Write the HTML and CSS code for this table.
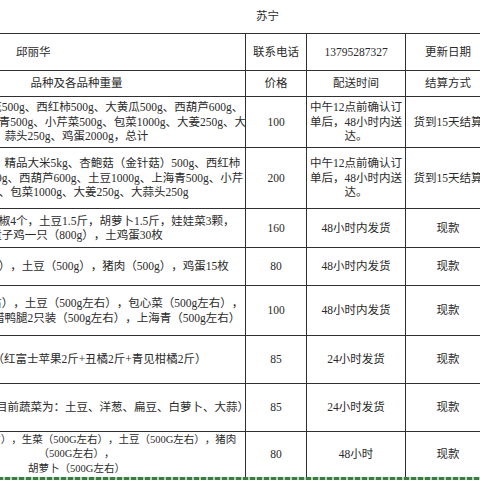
FILE: index.html
```html
<!DOCTYPE html>
<html lang="zh-CN">
<head>
<meta charset="utf-8">
<title>苏宁</title>
<link rel="stylesheet" href="styles.css">
</head>
<body>
<div class="sheet">
  <div class="title"><span>苏宁</span></div>
  <div class="grid">
    <div class="c name">邱丽华</div>
    <div class="c">联系电话</div>
    <div class="c">13795287327</div>
    <div class="c">更新日期</div>

    <div class="c">品种及各品种重量</div>
    <div class="c">价格</div>
    <div class="c">配送时间</div>
    <div class="c">结算方式</div>

    <div class="c">
      <span class="ln">土豆500g、西兰花500g、西红柿500g、大黄瓜500g、西葫芦600g、</span>
      <span class="ln">胡萝卜500g、上海青500g、小芹菜500g、包菜1000g、大姜250g、大</span>
      <span class="ln">蒜头250g、鸡蛋2000g，总计</span>
    </div>
    <div class="c">100</div>
    <div class="c">
      <span class="ln">中午12点前确认订</span>
      <span class="ln">单后，48小时内送</span>
      <span class="ln">达。</span>
    </div>
    <div class="c">货到15天结算</div>

    <div class="c">
      <span class="ln">乐享套餐二内含：精品大米5kg、杏鲍菇（金针菇）500g、西红柿</span>
      <span class="ln">1000g、大黄瓜500g、西葫芦600g、土豆1000g、上海青500g、小芹</span>
      <span class="ln">菜500g、包菜1000g、大姜250g、大蒜头250g</span>
    </div>
    <div class="c">200</div>
    <div class="c">
      <span class="ln">中午12点前确认订</span>
      <span class="ln">单后，48小时内送</span>
      <span class="ln">达。</span>
    </div>
    <div class="c">货到15天结算</div>

    <div class="c">
      <span class="ln">五花肉500g，青椒4个，土豆1.5斤，胡萝卜1.5斤，娃娃菜3颗，</span>
      <span class="ln">童子鸡一只（800g），土鸡蛋30枚</span>
    </div>
    <div class="c">160</div>
    <div class="c">48小时内发货</div>
    <div class="c">现款</div>

    <div class="c">
      <span class="ln">西红柿（1000g），土豆（500g），猪肉（500g），鸡蛋15枚</span>
    </div>
    <div class="c">80</div>
    <div class="c">48小时内发货</div>
    <div class="c">现款</div>

    <div class="c">
      <span class="ln">胡萝卜（500g左右），土豆（500g左右），包心菜（500g左右），</span>
      <span class="ln">排骨500g左右，腊鸭腿2只装（500g左右），上海青（500g左右）</span>
    </div>
    <div class="c">100</div>
    <div class="c">48小时内发货</div>
    <div class="c">现款</div>

    <div class="c">
      <span class="ln">水果套餐（红富士苹果2斤+丑橘2斤+青见柑橘2斤）</span>
    </div>
    <div class="c">85</div>
    <div class="c">24小时发货</div>
    <div class="c">现款</div>

    <div class="c">
      <span class="ln">时令蔬菜大套餐（目前蔬菜为：土豆、洋葱、扁豆、白萝卜、大蒜）</span>
    </div>
    <div class="c">85</div>
    <div class="c">24小时发货</div>
    <div class="c">现款</div>

    <div class="c small">
      <span class="ln">土鸡蛋（10枚左右），生菜（500G左右），土豆（500G左右），猪肉</span>
      <span class="ln">（500G左右），</span>
      <span class="ln">胡萝卜（500G左右）</span>
    </div>
    <div class="c">80</div>
    <div class="c">48小时</div>
    <div class="c">现款</div>
  </div>
  <div class="marquee"></div>
</div>
</body>
</html>
```

FILE: styles.css
```css
html, body {
  margin: 0;
  padding: 0;
  overflow: hidden;
  background: #ffffff;
}

body {
  font-family: "Liberation Serif", "Noto Sans CJK SC", serif;
  font-size: 11.5px;
  line-height: 14.5px;
  color: #2a2a2a;
  text-spacing-trim: space-all;
}

.sheet {
  width: max-content;
  margin-left: -93px;
}

.title {
  height: 33px;
  display: flex;
  align-items: center;
  padding-left: 349px;
}

.grid {
  display: grid;
  grid-template-columns: 337px 60px 98px 84px;
  grid-template-rows: 36px 25px 50px 60px 38px 37px 49px 47px 47px 45px;
  gap: 1px;
  padding: 1px 1px 0 1px;
  background: #303030;
}

.c {
  background: #ffffff;
  display: flex;
  flex-direction: column;
  align-items: center;
  justify-content: center;
  overflow: clip;
  white-space: nowrap;
}

.ln {
  display: block;
  white-space: nowrap;
}

.name {
  align-items: flex-start;
  padding-left: 108px;
}

.small {
  font-size: 10.5px;
}

.marquee {
  height: 3px;
  background: repeating-linear-gradient(90deg, #3b7d41 0 5px, #b8d4b8 5px 7px);
}
```
